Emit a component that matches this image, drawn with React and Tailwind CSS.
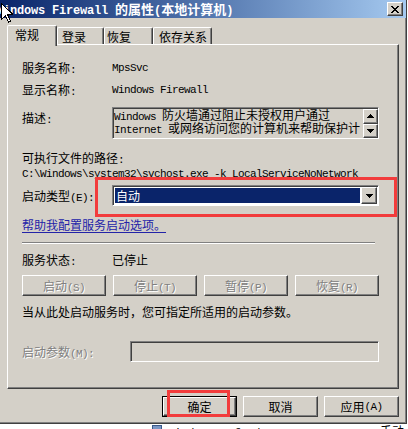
import React from "react";

const raised =
  "border border-t-white border-l-white border-r-[#404040] border-b-[#404040] shadow-[inset_-1px_-1px_0_#808080] bg-[#d4d0c8]";
const sunken =
  "border border-t-[#808080] border-l-[#808080] border-r-white border-b-white shadow-[inset_1px_1px_0_#404040]";
const disabledText = "text-[#808080] [text-shadow:1px_1px_0_#ffffff]";

// SimSun-like mix: ASCII runs are half width (6px), CJK glyphs 12px
const T = ({ s, latin = "font-['Liberation_Mono',monospace] text-[11px] tracking-[-0.6px] leading-[0px]" }) =>
  s
    .split(/([\x20-\x7e]+)/)
    .filter(Boolean)
    .map((p, i) =>
      /^[\x20-\x7e]+$/.test(p) ? (
        <span key={i} className={latin}>
          {p}
        </span>
      ) : (
        <span key={i}>{p}</span>
      )
    );

const Tri = ({ up }) => (
  <svg width="7" height="4" viewBox="0 0 7 4" shapeRendering="crispEdges">
    <path d={up ? "M0 4h7L3.5 0z" : "M0 0h7L3.5 4z"} fill="#000" />
  </svg>
);

const Tab = ({ label, w, pl, active }) =>
  active ? (
    <div
      className={`relative z-10 h-[21px] -mb-[2px] ${w} ${pl} pt-[2px] leading-[14px] bg-[#d4d0c8] border-t border-l border-r border-t-white border-l-white border-r-[#404040] shadow-[inset_-1px_0_0_#808080] rounded-t-[2px]`}
    >
      {label}
    </div>
  ) : (
    <div
      className={`h-[17px] ${w} ${pl} pt-[2px] leading-[14px] border-t border-l border-r border-t-white border-l-white border-r-[#404040] shadow-[inset_-1px_0_0_#808080] rounded-t-[2px]`}
    >
      {label}
    </div>
  );

const GrayButton = ({ s }) => (
  <div className={`w-[84px] h-[21px] flex items-center justify-center leading-[14px] ${raised}`}>
    <span className={disabledText}>
      <T s={s} />
    </span>
  </div>
);

export default function App() {
  return (
    <div className="relative w-[408px] h-[429px] overflow-hidden bg-white text-[12px] text-black font-['Noto_Sans_CJK_SC',sans-serif] whitespace-pre">
      <div className="flex flex-col w-[407px] h-[424px] bg-[#d4d0c8] border-r border-b border-[#404040] shadow-[inset_-1px_-1px_0_#808080]">
        {/* Title bar */}
        <div className="h-[18px] w-[406px] flex items-center justify-between pr-[3px] bg-linear-to-r from-[#0a246a] to-[#a6caf0]">
          <div className="-ml-[4px] h-[14px] text-white font-bold leading-[14px]">
            <span className="font-['Liberation_Mono',monospace] tracking-[-0.2px]">Windows Firewall </span>
            <span className="text-[13px]">的属性</span>
            <span className="font-['Liberation_Mono',monospace]">(</span>
            <span className="text-[13px]">本地计算机</span>
            <span className="font-['Liberation_Mono',monospace]">)</span>
          </div>
          <div className={`w-[16px] h-[14px] flex items-center justify-center ${raised}`}>
            <svg width="8" height="7" viewBox="0 0 8 7" shapeRendering="crispEdges">
              <path
                d="M0 0h2v1h1v1h2V1h1V0h2v1H7v1H6v1H5v1h1v1h1v1h1v1H6V6H5V5H3v1H2v1H0V6h1V5h1V4h1V3H2V2H1V1H0z"
                fill="#000"
              />
            </svg>
          </div>
        </div>

        {/* Tabs */}
        <div className="flex items-end h-[19px] mt-[7px] pl-[7px]">
          <Tab label="常规" w="w-[50px]" pl="pl-[7px]" active />
          <Tab label="登录" w="w-[47px]" pl="pl-[4px]" />
          <Tab label="恢复" w="w-[49px]" pl="pl-[2px]" />
          <Tab label="依存关系" w="w-[59px]" pl="pl-[5px]" />
        </div>

        {/* Tab panel */}
        <div className="w-[392px] h-[345px] ml-[7px] pl-[14px] pt-[12px] border border-t-white border-l-white border-r-[#404040] border-b-[#404040] shadow-[inset_-1px_-1px_0_#808080]">
          <div className="flex items-center h-[22px]">
            <div className="w-[90px]">
              <T s="服务名称:" />
            </div>
            <T s="MpsSvc" />
          </div>
          <div className="flex items-center h-[22px]">
            <div className="w-[90px]">
              <T s="显示名称:" />
            </div>
            <T s="Windows Firewall" />
          </div>

          <div className="flex items-start mt-[6px]">
            <div className="w-[90px] pt-[4px] h-[18px] leading-[14px]">
              <T s="描述:" />
            </div>
            <div className={`flex w-[267px] h-[32px] ${sunken}`}>
              <div className="flex-1 pl-[1px] leading-[13px] overflow-hidden">
                <div className="h-[13px]">
                  <T s="Windows 防火墙通过阻止未授权用户通过" />
                </div>
                <div className="h-[13px]">
                  <T s="Internet 或网络访问您的计算机来帮助保护计" />
                </div>
              </div>
              <div className="flex flex-col w-[15px] mt-[1px]">
                <div className={`h-[15px] flex items-center justify-center ${raised}`}>
                  <Tri up />
                </div>
                <div className={`h-[15px] flex items-center justify-center ${raised}`}>
                  <Tri />
                </div>
              </div>
            </div>
          </div>

          <div className="mt-[12px] h-[14px] leading-[14px]">
            <T s="可执行文件的路径:" />
          </div>
          <div className="h-[14px] leading-[14px]">
            <T s="C:\Windows\system32\svchost.exe -k LocalServiceNoNetwork" />
          </div>

          <div className="flex items-center h-[21px] mt-[6px]">
            <div className="w-[90px] h-[14px] leading-[14px]">
              <T s="启动类型(E):" />
            </div>
            <div className={`flex w-[267px] h-[21px] p-[1px] bg-white ${sunken}`}>
              <div className="flex-1 p-[1px]">
                <div className="h-full bg-[#0a246a] text-white pl-[1px] leading-[15px]">自动</div>
              </div>
              <div className={`w-[16px] flex items-center justify-center ${raised}`}>
                <Tri />
              </div>
            </div>
          </div>

          <div className="mt-[12px] h-[14px] leading-[14px] text-[#2323a8] underline underline-offset-2">
            帮助我配置服务启动选项。
          </div>

          <div className="mt-[10px] w-[353px] h-[2px] border-t border-b border-t-[#808080] border-b-white" />

          <div className="flex mt-[9px] h-[14px] leading-[14px]">
            <div className="w-[90px]">
              <T s="服务状态:" />
            </div>
            <div>已停止</div>
          </div>

          <div className="flex gap-[7px] mt-[8px]">
            <GrayButton s="启动(S)" />
            <GrayButton s="停止(T)" />
            <GrayButton s="暂停(P)" />
            <GrayButton s="恢复(R)" />
          </div>

          <div className="mt-[9px] h-[14px] leading-[14px]">当从此处启动服务时，您可指定所适用的启动参数。</div>

          <div className="flex items-center mt-[22px]">
            <div className={`w-[108px] h-[14px] leading-[14px] ${disabledText}`}>
              <T s="启动参数(M):" />
            </div>
            <div className={`w-[249px] h-[21px] ${sunken}`} />
          </div>
        </div>

        {/* Dialog buttons */}
        <div className="flex justify-end gap-[6px] mt-[7px] pr-[7px]">
          <div className="w-[75px] h-[21px] border border-black">
            <div className={`h-full flex items-center justify-center leading-[14px] ${raised}`}>确定</div>
          </div>
          <div className={`w-[75px] h-[21px] flex items-center justify-center leading-[14px] ${raised}`}>取消</div>
          <div className={`w-[75px] h-[21px] flex items-center justify-center leading-[14px] ${raised}`}>
            <T s="应用(A)" />
          </div>
        </div>
      </div>

      {/* Window behind, barely visible */}
      <div className="flex items-start h-[5px] overflow-hidden pl-[152px]">
        <div className="w-[10px] h-[10px] mt-[1px] bg-[#7a96c4] border border-[#3a5a8a]" />
        <div className="ml-[6px] leading-[12px] mt-[1px]">
          <T s="Windows Defender" latin="font-['Liberation_Mono',monospace] text-[11px]" />
        </div>
        <div className="ml-auto mr-[4px] leading-[12px] mt-[1px]">手动</div>
      </div>

      {/* Red annotation boxes */}
      <div className="absolute left-[95px] top-[177px] w-[302px] h-[40px] border-[3px] border-[#f23c3c]" />
      <div className="absolute left-[167px] top-[390px] w-[63px] h-[27px] border-[3px] border-[#f23c3c]" />

      {/* Mouse pointer */}
      <svg className="absolute left-[1px] top-[3px]" width="12" height="20" viewBox="0 0 12 20" shapeRendering="crispEdges">
        <path d="M0.5 0.5v16l4-4 3 6.5 2-1-3-6.5h5.5z" fill="#fff" stroke="#000" />
      </svg>
    </div>
  );
}
